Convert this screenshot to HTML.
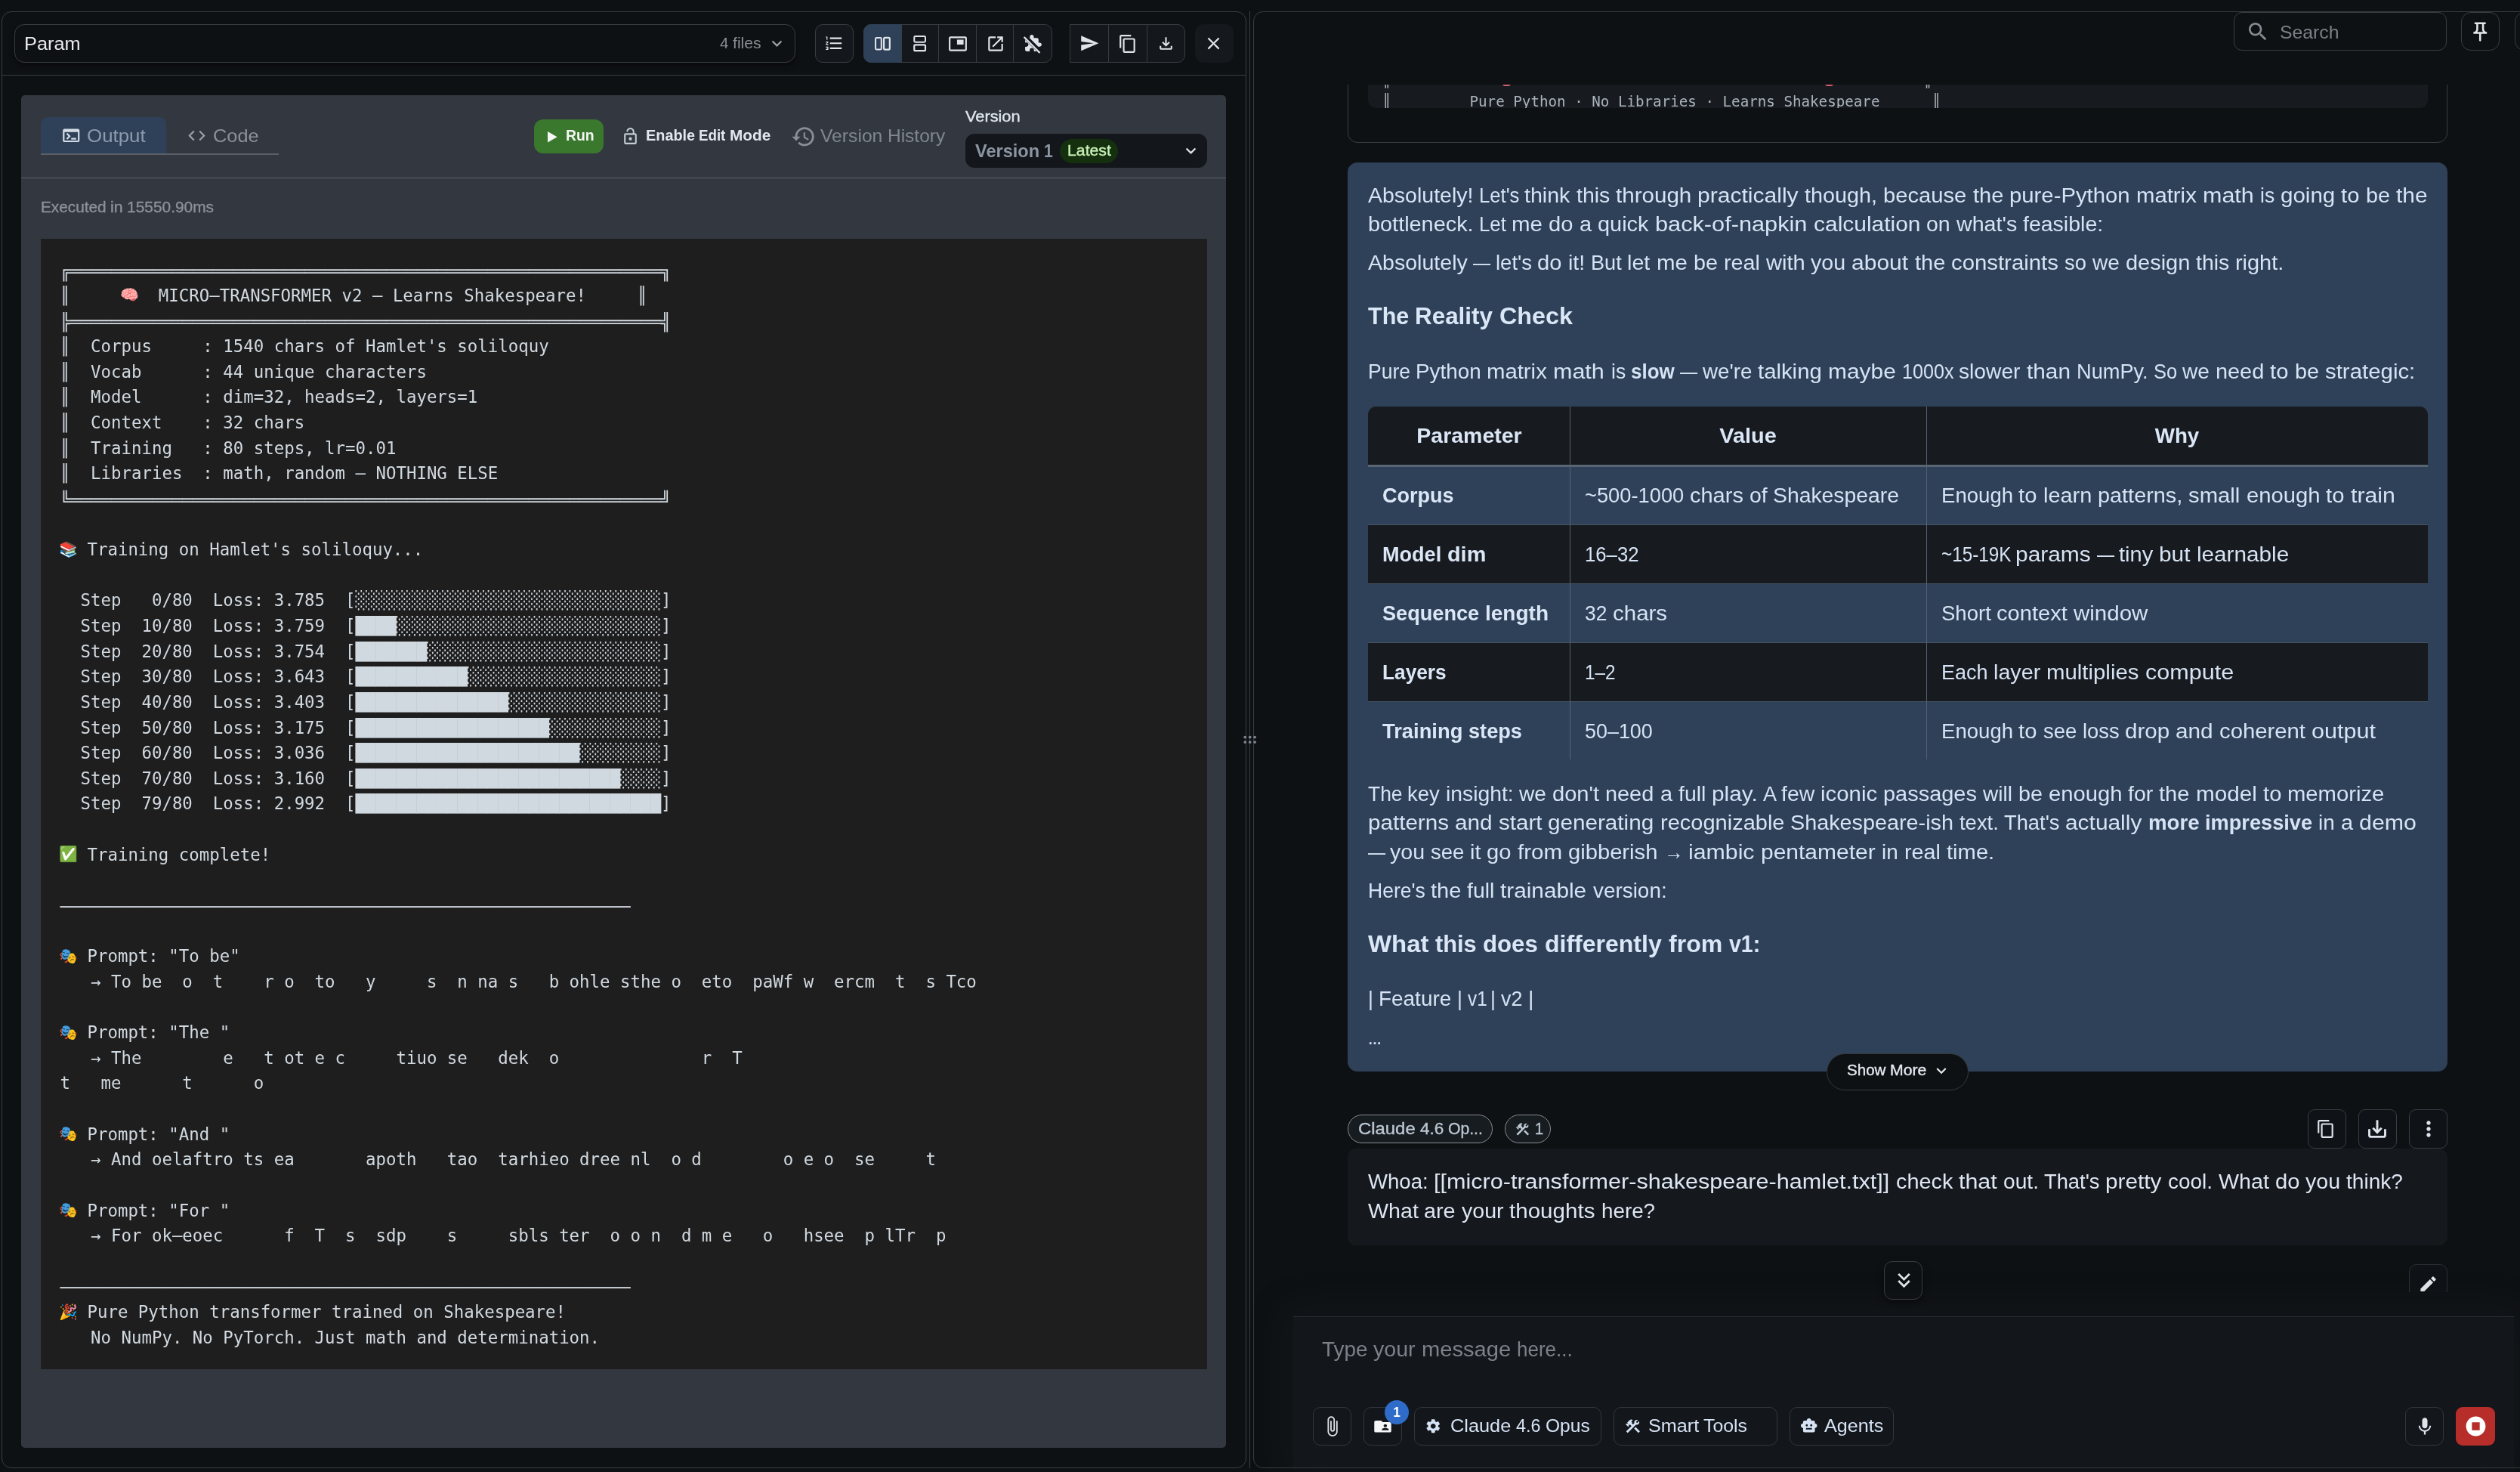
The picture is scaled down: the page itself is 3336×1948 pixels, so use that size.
<!DOCTYPE html><html lang="en"><head><meta charset="utf-8"><title>Param</title><style>

html,body{margin:0;padding:0;background:#0e1114;overflow:hidden}
body{width:3336px;height:1948px;position:relative;overflow:hidden;font-family:"Liberation Sans", sans-serif;}
.t{position:absolute;white-space:pre;line-height:1.2;}
.w span{position:absolute;top:0;transform-origin:0 0;white-space:pre}
.m{position:absolute;white-space:pre;font-family:"DejaVu Sans Mono", "Liberation Mono", monospace;}
.e{display:inline-block;width:1.1236em;height:1em;overflow:visible;vertical-align:0.07em;line-height:1;font-family:"Noto Color Emoji","DejaVu Sans",sans-serif;font-size:0.89em;text-indent:-0.05em;letter-spacing:0;white-space:nowrap}
svg{display:block;overflow:visible}

.t{font-family:"Liberation Sans", sans-serif}.t b{font-weight:700}
</style></head><body><div id="root" style="position:absolute;left:0;top:0;width:3336px;height:1948px;will-change:transform;transform-origin:0 0">
<div style="position:absolute;left:2px;top:15px;width:1648px;height:1928px;box-sizing:border-box;border:1px solid #393d42;border-radius:13px;background:#0e1114"></div>
<div style="position:absolute;left:3px;top:99px;width:1646px;height:1px;background:#393d42"></div>
<div style="position:absolute;left:19px;top:32px;width:1034px;height:51px;box-sizing:border-box;border:1px solid #393d42;border-radius:13px;background:#0e1114;box-shadow:0 3px 6px rgba(0,0,0,.55)"></div>
<div class="t" id="param" style="top:44.12px;font-size:23.63px;font-weight:400;color:#e9ebee;transform:scaleX(1.0727);transform-origin:0 0;left:31.50px;">Param</div>
<div class="t w" style="top:44.75px;font-size:20.26px;font-weight:400;color:#8a8e94;left:953.00px;"><span style="left:0.00px;transform:scaleX(1.0185)">4 </span><span style="left:17.20px;transform:scaleX(1.0460)">files</span></div>
<svg style="position:absolute;left:1014.70px;top:43.50px;" width="27" height="27" viewBox="0 0 24 24"><path fill="#9da1a6" d="M16.59 8.59L12 13.17 7.41 8.59 6 10l6 6 6-6z"/></svg>
<div style="position:absolute;left:1079px;top:32px;width:51px;height:51px;box-sizing:border-box;border:1px solid #393d42;border-radius:10px;background:#14171c"></div>
<svg style="position:absolute;left:1091.25px;top:44.35px;" width="26.5" height="26.5" viewBox="0 0 24 24"><path fill="#e4e7ea" d="M2 17h2v.5H3v1h1v.5H2v1h3v-4H2v1zm1-9h1V4H2v1h1v3zm-1 3h1.8L2 13.1v.9h3v-1H3.2L5 10.9V10H2v1zm5-6v2h14V5H7zm0 14h14v-2H7v2zm0-6h14v-2H7v2z"/></svg>
<div style="position:absolute;left:1143px;top:32px;width:250px;height:51px;box-sizing:border-box;border:1px solid #393d42;border-radius:10px;background:#14171c"></div>
<div style="position:absolute;left:1143px;top:32px;width:51px;height:51px;border-radius:10px 0 0 10px;background:#2f4158"></div>
<div style="position:absolute;left:1193px;top:33px;width:1px;height:49px;background:#393d42"></div>
<div style="position:absolute;left:1242px;top:33px;width:1px;height:49px;background:#393d42"></div>
<div style="position:absolute;left:1292px;top:33px;width:1px;height:49px;background:#393d42"></div>
<div style="position:absolute;left:1341px;top:33px;width:1px;height:49px;background:#393d42"></div>
<svg style="position:absolute;left:1155px;top:44px;" width="28" height="28" viewBox="0 0 28 28"><g transform="translate(14 14) scale(.92) translate(-14 -14)"><rect x="3.2" y="5.2" width="8.4" height="17" rx="1.6" fill="none" stroke="#dfe4ea" stroke-width="2.2"/><rect x="15.2" y="5.2" width="8.4" height="17" rx="1.6" fill="none" stroke="#dfe4ea" stroke-width="2.4"/></g></svg>
<svg style="position:absolute;left:1204px;top:44px;" width="28" height="28" viewBox="0 0 28 28"><g transform="translate(14 14) scale(.92) translate(-14 -14)"><rect x="5.6" y="3.2" width="16" height="8.4" rx="1.6" fill="none" stroke="#dfe4ea" stroke-width="2.2"/><rect x="5.6" y="15.6" width="16" height="8.4" rx="1.6" fill="none" stroke="#dfe4ea" stroke-width="2.4"/></g></svg>
<svg style="position:absolute;left:1254.50px;top:44.50px;" width="26" height="26" viewBox="0 0 24 24"><path fill="#dfe4ea" d="M19 7h-8v6h8V7zm2-4H3c-1.1 0-2 .9-2 2v14c0 1.1.9 1.98 2 1.98h18c1.1 0 2-.88 2-1.98V5c0-1.1-.9-2-2-2zm0 16.01H3V4.98h18v14.03z"/></svg>
<svg style="position:absolute;left:1305.00px;top:44.50px;" width="26" height="26" viewBox="0 0 24 24"><path fill="#dfe4ea" d="M19 19H5V5h7V3H5c-1.11 0-2 .9-2 2v14c0 1.1.89 2 2 2h14c1.1 0 2-.9 2-2v-7h-2v7zM14 3v2h3.59l-9.83 9.83 1.41 1.41L19 6.41V10h2V3h-7z"/></svg>
<svg style="position:absolute;left:1354.50px;top:45.00px;" width="25" height="25" viewBox="0 0 24 24"><path fill="#dfe4ea" d="M20.5 11H19V7c0-1.1-.9-2-2-2h-4V3.5C13 2.12 11.88 1 10.5 1S8 2.12 8 3.5V5H4c-1.1 0-1.99.9-1.99 2v3.8H3.5c1.49 0 2.7 1.21 2.7 2.7s-1.21 2.7-2.7 2.7H2V20c0 1.1.9 2 2 2h3.8v-1.5c0-1.49 1.21-2.7 2.7-2.7 1.49 0 2.7 1.21 2.7 2.7V22H17c1.1 0 2-.9 2-2v-4h1.5c1.38 0 2.5-1.12 2.5-2.5S21.88 11 20.5 11z"/></svg>
<svg style="position:absolute;left:1353px;top:43.5px;" width="28" height="28" viewBox="0 0 28 28"><path d="M3 3.5 L25 25.5" stroke="#14171c" stroke-width="6"/><path d="M2.6 5 L23.5 26" stroke="#dfe4ea" stroke-width="2.4"/></svg>
<div style="position:absolute;left:1416px;top:32px;width:153px;height:51px;box-sizing:border-box;border:1px solid #393d42;border-radius:0 10px 10px 0;background:#14171c"></div>
<div style="position:absolute;left:1467px;top:33px;width:1px;height:49px;background:#393d42"></div>
<div style="position:absolute;left:1518px;top:33px;width:1px;height:49px;background:#393d42"></div>
<svg style="position:absolute;left:1428.75px;top:44.25px;" width="26.5" height="26.5" viewBox="0 0 24 24"><path fill="#dfe4ea" d="M2.01 21L23 12 2.01 3 2 10l15 2-15 2z"/></svg>
<svg style="position:absolute;left:1479.50px;top:44.50px;" width="26" height="26" viewBox="0 0 24 24"><path fill="#dfe4ea" d="M16 1H4c-1.1 0-2 .9-2 2v14h2V3h12V1zm3 4H8c-1.1 0-2 .9-2 2v14c0 1.1.9 2 2 2h11c1.1 0 2-.9 2-2V7c0-1.1-.9-2-2-2zm0 16H8V7h11v14z"/></svg>
<svg style="position:absolute;left:1531.00px;top:44.50px;" width="25" height="25" viewBox="0 0 24 24"><path fill="#dfe4ea" d="M18 15v3H6v-3H4v3c0 1.1.9 2 2 2h12c1.1 0 2-.9 2-2v-3h-2zm-1-4l-1.41-1.41L13 12.17V4h-2v8.17L8.41 9.59 7 11l5 5 5-5z"/></svg>
<div style="position:absolute;left:1582px;top:32px;width:51px;height:51px;border-radius:11px;background:#15181c"></div>
<svg style="position:absolute;left:1593.00px;top:44.00px;" width="27" height="27" viewBox="0 0 24 24"><path fill="#e4e7ea" d="M19 6.41L17.59 5 12 10.59 6.41 5 5 6.41 10.59 12 5 17.59 6.41 19 12 13.41 17.59 19 19 17.59 13.41 12z"/></svg>
<div style="position:absolute;left:28px;top:126px;width:1595px;height:1790px;border-radius:5px;background:#333740"></div>
<div style="position:absolute;left:54px;top:155px;width:166px;height:49px;border-radius:9px 9px 0 0;background:#2f4158"></div>
<div style="position:absolute;left:54px;top:203px;width:315px;height:2px;background:#5b5f67"></div>
<svg style="position:absolute;left:80.75px;top:166.25px;" width="26.5" height="26.5" viewBox="0 0 24 24"><path fill="#d3dbe6" d="M20 4H4c-1.11 0-2 .9-2 2v12c0 1.1.89 2 2 2h16c1.1 0 2-.9 2-2V6c0-1.1-.9-2-2-2zm0 14H4V8h16v10zm-2-1h-6v-2h6v2zM7.5 17l-1.41-1.41L8.67 13l-2.59-2.59L7.5 9l4 4-4 4z"/></svg>
<div class="t" id="output" style="top:165.72px;font-size:23.63px;font-weight:400;color:#8c9bad;transform:scaleX(1.0956);transform-origin:0 0;left:115.00px;">Output</div>
<svg style="position:absolute;left:247.00px;top:166.00px;" width="27" height="27" viewBox="0 0 24 24"><path fill="#9aa0a8" d="M9.4 16.6L4.8 12l4.6-4.6L8 6l-6 6 6 6 1.4-1.4zm5.2 0l4.6-4.6-4.6-4.6L16 6l6 6-6 6-1.4-1.4z"/></svg>
<div class="t" id="code" style="top:165.72px;font-size:23.63px;font-weight:400;color:#8a919b;transform:scaleX(1.0736);transform-origin:0 0;left:281.50px;">Code</div>
<div style="position:absolute;left:707px;top:158px;width:92px;height:45px;border-radius:12px;background:#3a782e"></div>
<svg style="position:absolute;left:725px;top:173.8px;" width="13" height="14.4" viewBox="0 0 13 14.4"><path d="M0 0 L12.6 7.2 L0 14.4 Z" fill="#f4f7f4"/></svg>
<div class="t" id="run" style="top:166.95px;font-size:20.26px;font-weight:700;color:#f4f7f4;transform:scaleX(0.9567);transform-origin:0 0;left:748.50px;">Run</div>
<svg style="position:absolute;left:822px;top:168.3px;" width="25" height="25" viewBox="0 0 24 24"><path fill="#c5ccd6" d="M12 17c1.1 0 2-.9 2-2s-.9-2-2-2-2 .9-2 2 .9 2 2 2zm6-9h-1V6c0-2.76-2.24-5-5-5S7 3.24 7 6h1.9c0-1.71 1.39-3.1 3.1-3.1 1.71 0 3.1 1.39 3.1 3.1v2H6c-1.1 0-2 .9-2 2v10c0 1.1.9 2 2 2h12c1.1 0 2-.9 2-2V10c0-1.1-.9-2-2-2zm0 12H6V10h12v10z"/></svg>
<div class="t w" style="top:166.95px;font-size:20.26px;font-weight:700;color:#e3e7ee;left:854.50px;"><span style="left:0.00px;transform:scaleX(0.9809)">Enable </span><span style="left:70.66px;transform:scaleX(0.9245)">Edit </span><span style="left:111.22px;transform:scaleX(1.0278)">Mode</span></div>
<svg style="position:absolute;left:1047.25px;top:164.05px;" width="33.5" height="33.5" viewBox="0 0 24 24"><path fill="#8a9099" d="M13 3c-4.97 0-9 4.03-9 9H1l3.89 3.89.07.14L9 12H6c0-3.87 3.13-7 7-7s7 3.13 7 7-3.13 7-7 7c-1.93 0-3.68-.79-4.94-2.06l-1.42 1.42C8.27 19.99 10.51 21 13 21c4.97 0 9-4.03 9-9s-4.03-9-9-9zm-1 5v5l4.28 2.54.72-1.21-3.5-2.08V8H12z"/></svg>
<div class="t w" style="top:166.02px;font-size:23.63px;font-weight:400;color:#7f8791;left:1086.00px;"><span style="left:0.00px;transform:scaleX(1.0450)">Version </span><span style="left:89.22px;transform:scaleX(1.0357)">History</span></div>
<div class="t" id="verlabel" style="top:142.45px;font-size:20.26px;font-weight:400;color:#dfe6ef;-webkit-text-stroke:0.35px currentColor;transform:scaleX(1.0738);transform-origin:0 0;left:1277.50px;">Version</div>
<div style="position:absolute;left:1278px;top:177px;width:320px;height:45px;border-radius:12px;background:#13161b"></div>
<div class="t w" style="top:185.62px;font-size:23.63px;font-weight:700;color:#8c95a2;left:1290.50px;"><span style="left:0.00px;transform:scaleX(0.9968)">Version </span><span style="left:91.62px;transform:scaleX(0.9000)">1</span></div>
<div style="position:absolute;left:1403px;top:184px;width:77px;height:32px;border-radius:16px;background:#15300e"></div>
<div class="t" id="latest" style="top:186.85px;font-size:20.26px;font-weight:400;color:#c9f2b8;-webkit-text-stroke:0.35px currentColor;transform:scaleX(1.0493);transform-origin:0 0;left:1413.00px;">Latest</div>
<svg style="position:absolute;left:1563.00px;top:185.50px;" width="27" height="27" viewBox="0 0 24 24"><path fill="#dfe4ea" d="M16.59 8.59L12 13.17 7.41 8.59 6 10l6 6 6-6z"/></svg>
<div style="position:absolute;left:28px;top:235px;width:1595px;height:1px;background:#5a5e66"></div>
<div class="t w" style="top:262.45px;font-size:20.26px;font-weight:400;color:#8c9199;-webkit-text-stroke:0.35px currentColor;left:53.50px;"><span style="left:0.00px;transform:scaleX(1.0262)">Executed </span><span style="left:92.42px;transform:scaleX(1.0526)">in </span><span style="left:114.94px;transform:scaleX(1.0325)">15550.90ms</span></div>
<div style="position:absolute;left:54px;top:316px;width:1544px;height:1496px;background:#1e1e1e"></div>
<div class="m" style="left:79.6px;top:342.85px;font-size:22.4px;line-height:33.6px;height:33.6px;color:#d1d9e0">╔══════════════════════════════════════════════════════════╗</div>
<div class="m" style="left:79.6px;top:374.88px;font-size:22.4px;line-height:33.6px;height:33.6px;color:#d1d9e0">║     <span class="e">🧠</span>  MICRO—TRANSFORMER v2 — Learns Shakespeare!     ║</div>
<div class="m" style="left:79.6px;top:410.11px;font-size:22.4px;line-height:33.6px;height:33.6px;color:#d1d9e0">╠══════════════════════════════════════════════════════════╣</div>
<div class="m" style="left:79.6px;top:442.14px;font-size:22.4px;line-height:33.6px;height:33.6px;color:#d1d9e0">║  Corpus     : 1540 chars of Hamlet's soliloquy</div>
<div class="m" style="left:79.6px;top:475.77px;font-size:22.4px;line-height:33.6px;height:33.6px;color:#d1d9e0">║  Vocab      : 44 unique characters</div>
<div class="m" style="left:79.6px;top:509.40px;font-size:22.4px;line-height:33.6px;height:33.6px;color:#d1d9e0">║  Model      : dim=32, heads=2, layers=1</div>
<div class="m" style="left:79.6px;top:543.03px;font-size:22.4px;line-height:33.6px;height:33.6px;color:#d1d9e0">║  Context    : 32 chars</div>
<div class="m" style="left:79.6px;top:576.66px;font-size:22.4px;line-height:33.6px;height:33.6px;color:#d1d9e0">║  Training   : 80 steps, lr=0.01</div>
<div class="m" style="left:79.6px;top:610.29px;font-size:22.4px;line-height:33.6px;height:33.6px;color:#d1d9e0">║  Libraries  : math, random — NOTHING ELSE</div>
<div class="m" style="left:79.6px;top:645.52px;font-size:22.4px;line-height:33.6px;height:33.6px;color:#d1d9e0">╚══════════════════════════════════════════════════════════╝</div>
<div class="m" style="left:79.6px;top:711.18px;font-size:22.4px;line-height:33.6px;height:33.6px;color:#d1d9e0"><span class="e">📚</span> Training on Hamlet's soliloquy...</div>
<div class="m" style="left:79.6px;top:778.44px;font-size:22.4px;line-height:33.6px;height:33.6px;color:#d1d9e0">  Step   0/80  Loss: 3.785  [░░░░░░░░░░░░░░░░░░░░░░░░░░░░░░]</div>
<div class="m" style="left:79.6px;top:812.07px;font-size:22.4px;line-height:33.6px;height:33.6px;color:#d1d9e0">  Step  10/80  Loss: 3.759  [████░░░░░░░░░░░░░░░░░░░░░░░░░░]</div>
<div class="m" style="left:79.6px;top:845.70px;font-size:22.4px;line-height:33.6px;height:33.6px;color:#d1d9e0">  Step  20/80  Loss: 3.754  [███████░░░░░░░░░░░░░░░░░░░░░░░]</div>
<div class="m" style="left:79.6px;top:879.33px;font-size:22.4px;line-height:33.6px;height:33.6px;color:#d1d9e0">  Step  30/80  Loss: 3.643  [███████████░░░░░░░░░░░░░░░░░░░]</div>
<div class="m" style="left:79.6px;top:912.96px;font-size:22.4px;line-height:33.6px;height:33.6px;color:#d1d9e0">  Step  40/80  Loss: 3.403  [███████████████░░░░░░░░░░░░░░░]</div>
<div class="m" style="left:79.6px;top:946.59px;font-size:22.4px;line-height:33.6px;height:33.6px;color:#d1d9e0">  Step  50/80  Loss: 3.175  [███████████████████░░░░░░░░░░░]</div>
<div class="m" style="left:79.6px;top:980.22px;font-size:22.4px;line-height:33.6px;height:33.6px;color:#d1d9e0">  Step  60/80  Loss: 3.036  [██████████████████████░░░░░░░░]</div>
<div class="m" style="left:79.6px;top:1013.85px;font-size:22.4px;line-height:33.6px;height:33.6px;color:#d1d9e0">  Step  70/80  Loss: 3.160  [██████████████████████████░░░░]</div>
<div class="m" style="left:79.6px;top:1047.48px;font-size:22.4px;line-height:33.6px;height:33.6px;color:#d1d9e0">  Step  79/80  Loss: 2.992  [██████████████████████████████]</div>
<div class="m" style="left:79.6px;top:1114.74px;font-size:22.4px;line-height:33.6px;height:33.6px;color:#d1d9e0"><span class="e">✅</span> Training complete!</div>
<div class="m" style="left:79.6px;top:1184.00px;font-size:22.4px;line-height:33.6px;height:33.6px;color:#d1d9e0">────────────────────────────────────────────────────────</div>
<div class="m" style="left:79.6px;top:1249.26px;font-size:22.4px;line-height:33.6px;height:33.6px;color:#d1d9e0"><span class="e">🎭</span> Prompt: "To be"</div>
<div class="m" style="left:79.6px;top:1282.89px;font-size:22.4px;line-height:33.6px;height:33.6px;color:#d1d9e0">   → To be  o  t    r o  to   y     s  n na s   b ohle sthe o  eto  paWf w  ercm  t  s Tco</div>
<div class="m" style="left:79.6px;top:1350.15px;font-size:22.4px;line-height:33.6px;height:33.6px;color:#d1d9e0"><span class="e">🎭</span> Prompt: "The "</div>
<div class="m" style="left:79.6px;top:1383.78px;font-size:22.4px;line-height:33.6px;height:33.6px;color:#d1d9e0">   → The        e   t ot e c     tiuo se   dek  o              r  T</div>
<div class="m" style="left:79.6px;top:1417.41px;font-size:22.4px;line-height:33.6px;height:33.6px;color:#d1d9e0">t   me      t      o</div>
<div class="m" style="left:79.6px;top:1484.67px;font-size:22.4px;line-height:33.6px;height:33.6px;color:#d1d9e0"><span class="e">🎭</span> Prompt: "And "</div>
<div class="m" style="left:79.6px;top:1518.30px;font-size:22.4px;line-height:33.6px;height:33.6px;color:#d1d9e0">   → And oelaftro ts ea       apoth   tao  tarhieo dree nl  o d        o e o  se     t</div>
<div class="m" style="left:79.6px;top:1585.56px;font-size:22.4px;line-height:33.6px;height:33.6px;color:#d1d9e0"><span class="e">🎭</span> Prompt: "For "</div>
<div class="m" style="left:79.6px;top:1619.19px;font-size:22.4px;line-height:33.6px;height:33.6px;color:#d1d9e0">   → For ok—eoec      f  T  s  sdp    s     sbls ter  o o n  d m e   o   hsee  p lTr  p</div>
<div class="m" style="left:79.6px;top:1688.45px;font-size:22.4px;line-height:33.6px;height:33.6px;color:#d1d9e0">────────────────────────────────────────────────────────</div>
<div class="m" style="left:79.6px;top:1720.08px;font-size:22.4px;line-height:33.6px;height:33.6px;color:#d1d9e0"><span class="e">🎉</span> Pure Python transformer trained on Shakespeare!</div>
<div class="m" style="left:79.6px;top:1753.71px;font-size:22.4px;line-height:33.6px;height:33.6px;color:#d1d9e0">   No NumPy. No PyTorch. Just math and determination.</div>
<div style="position:absolute;left:1654px;top:15px;width:1px;height:1928px;background:#393d42"></div>
<div style="position:absolute;left:1659px;top:15px;width:1800px;height:1928px;box-sizing:border-box;border:1px solid #393d42;border-radius:13px;background:#0e1114"></div>
<svg style="position:absolute;left:1644px;top:970px;" width="22" height="18" viewBox="0 0 22 18"><circle cx="4.3" cy="5.6" r="1.9" fill="#7d8590"/><circle cx="4.3" cy="12.1" r="1.9" fill="#7d8590"/><circle cx="10.7" cy="5.6" r="1.9" fill="#7d8590"/><circle cx="10.7" cy="12.1" r="1.9" fill="#7d8590"/><circle cx="17.1" cy="5.6" r="1.9" fill="#7d8590"/><circle cx="17.1" cy="12.1" r="1.9" fill="#7d8590"/></svg>
<div style="position:absolute;left:1660px;top:112px;width:1676px;height:1600px;overflow:hidden">
<div style="position:absolute;left:124px;top:-92px;width:1456px;height:169px;box-sizing:border-box;border:1px solid #393d42;border-radius:13px"></div>
<div style="position:absolute;left:151px;top:-72px;width:1403px;height:103px;border-radius:11px;background:#171a1e;overflow:hidden"></div>
<div style="position:absolute;left:151px;top:-72px;width:1403px;height:103px;overflow:hidden"><div class="m" style="left:19.0px;top:80.76px;font-size:19.2px;line-height:28.8px;color:#a9b3bc">║         Pure Python · No Libraries · Learns Shakespeare      ║</div><div class="m" style="left:19.0px;top:51.96px;font-size:19.2px;line-height:28.8px;color:#a9b3bc">║                                                             ║</div><div style="position:absolute;left:178px;top:66.5px;width:11px;height:7px;border-radius:6px;background:#d9606e"></div><div style="position:absolute;left:605px;top:66.5px;width:11px;height:7px;border-radius:6px;background:#d9606e"></div></div>
</div>
<div style="position:absolute;left:2957px;top:16px;width:282px;height:51px;box-sizing:border-box;border:1px solid #393d42;border-radius:11px;background:#0e1114"></div>
<svg style="position:absolute;left:2973.00px;top:26.00px;" width="32" height="32" viewBox="0 0 24 24"><path fill="#868b92" d="M15.5 14h-.79l-.28-.27C15.41 12.59 16 11.11 16 9.5 16 5.91 13.09 3 9.5 3S3 5.91 3 9.5 5.91 16 9.5 16c1.61 0 3.09-.59 4.23-1.57l.27.28v.79l5 4.99L20.49 19l-4.99-5zm-6 0C7.01 14 5 11.99 5 9.5S7.01 5 9.5 5 14 7.01 14 9.5 11.99 14 9.5 14z"/></svg>
<div class="t" id="search" style="top:29.12px;font-size:23.63px;font-weight:400;color:#7c8087;transform:scaleX(1.0478);transform-origin:0 0;left:3017.50px;">Search</div>
<div style="position:absolute;left:3258px;top:16px;width:51px;height:51px;box-sizing:border-box;border:1px solid #393d42;border-radius:13px;background:#0e1114"></div>
<svg style="position:absolute;left:3268.45px;top:26.75px;" width="30.5" height="30.5" viewBox="0 0 24 24"><path fill="#e4e7ea" d="M14 4v5c0 1.12.37 2.16 1 3H9c.65-.86 1-1.9 1-3V4h4m3-2H7c-.55 0-1 .45-1 1s.45 1 1 1h1v5c0 1.66-1.34 3-3 3v2h5.97v7l1 1 1-1v-7H19v-2c-1.66 0-3-1.34-3-3V4h1c.55 0 1-.45 1-1s-.45-1-1-1z"/></svg>
<div style="position:absolute;left:3329px;top:16px;width:51px;height:51px;box-sizing:border-box;border:1px solid #393d42;border-radius:13px;background:#0e1114"></div>
<div style="position:absolute;left:1784px;top:215px;width:1456px;height:1203px;border-radius:13px;background:#2f4158"></div>
<div class="t w" style="top:242.70px;font-size:27.01px;font-weight:400;color:#d6e3f4;left:1810.50px;"><span style="left:0.00px;transform:scaleX(1.0555)">Absolutely! </span><span style="left:147.33px;transform:scaleX(0.9500)">Let's </span><span style="left:207.84px;transform:scaleX(1.0595)">think </span><span style="left:276.23px;transform:scaleX(1.0536)">this </span><span style="left:328.42px;transform:scaleX(1.0954)">through </span><span style="left:436.95px;transform:scaleX(1.1131)">practically </span><span style="left:578.92px;transform:scaleX(1.0661)">though, </span><span style="left:682.97px;transform:scaleX(1.0808)">because </span><span style="left:801.42px;transform:scaleX(1.0746)">the </span><span style="left:849.83px;transform:scaleX(1.0849)">pure-Python </span><span style="left:1017.55px;transform:scaleX(1.0855)">matrix </span><span style="left:1105.47px;transform:scaleX(1.1284)">math </span><span style="left:1181.67px;transform:scaleX(0.9815)">is </span><span style="left:1208.17px;transform:scaleX(1.0941)">going </span><span style="left:1288.67px;transform:scaleX(1.0832)">to </span><span style="left:1321.20px;transform:scaleX(1.0658)">be </span><span style="left:1361.22px;transform:scaleX(1.1074)">the</span></div>
<div class="t w" style="top:281.10px;font-size:27.01px;font-weight:400;color:#d6e3f4;left:1810.50px;"><span style="left:0.00px;transform:scaleX(1.0692)">bottleneck. </span><span style="left:147.66px;transform:scaleX(0.9563)">Let </span><span style="left:190.73px;transform:scaleX(1.0902)">me </span><span style="left:239.81px;transform:scaleX(1.0791)">do </span><span style="left:280.33px;transform:scaleX(1.0714)">a </span><span style="left:304.47px;transform:scaleX(1.0707)">quick </span><span style="left:380.00px;transform:scaleX(1.1375)">back-of-napkin </span><span style="left:590.00px;transform:scaleX(1.1093)">calculation </span><span style="left:739.86px;transform:scaleX(1.0545)">on </span><span style="left:779.45px;transform:scaleX(1.0607)">what's </span><span style="left:867.70px;transform:scaleX(1.0556)">feasible:</span></div>
<div class="t w" style="top:332.30px;font-size:27.01px;font-weight:400;color:#d6e3f4;left:1810.50px;"><span style="left:0.00px;transform:scaleX(1.0577)">Absolutely </span><span style="left:139.70px;transform:scaleX(0.8542)">— </span><span style="left:169.19px;transform:scaleX(1.0194)">let's </span><span style="left:224.94px;transform:scaleX(1.0791)">do </span><span style="left:265.45px;transform:scaleX(1.0548)">it! </span><span style="left:295.53px;transform:scaleX(1.0039)">But </span><span style="left:343.75px;transform:scaleX(1.0637)">let </span><span style="left:382.08px;transform:scaleX(1.0902)">me </span><span style="left:431.16px;transform:scaleX(1.0658)">be </span><span style="left:471.17px;transform:scaleX(1.0634)">real </span><span style="left:527.03px;transform:scaleX(1.0774)">with </span><span style="left:586.86px;transform:scaleX(1.0582)">you </span><span style="left:640.88px;transform:scaleX(1.1124)">about </span><span style="left:724.39px;transform:scaleX(1.0746)">the </span><span style="left:772.80px;transform:scaleX(1.0866)">constraints </span><span style="left:922.81px;transform:scaleX(1.0152)">so </span><span style="left:959.39px;transform:scaleX(1.0398)">we </span><span style="left:1003.09px;transform:scaleX(1.0720)">design </span><span style="left:1096.44px;transform:scaleX(1.0536)">this </span><span style="left:1148.62px;transform:scaleX(1.0698)">right.</span></div>
<div class="t w" style="top:400.11px;font-size:31.65px;font-weight:700;color:#dbe7f7;left:1810.50px;"><span style="left:0.00px;transform:scaleX(0.9654)">The </span><span style="left:62.80px;transform:scaleX(0.9924)">Reality </span><span style="left:174.50px;transform:scaleX(1.0211)">Check</span></div>
<div class="t w" style="top:475.90px;font-size:27.01px;font-weight:400;color:#d6e3f4;left:1810.50px;"><span style="left:0.00px;transform:scaleX(0.9831)">Pure </span><span style="left:63.45px;transform:scaleX(1.0324)">Python </span><span style="left:157.98px;transform:scaleX(1.0855)">matrix </span><span style="left:245.91px;transform:scaleX(1.1284)">math </span><span style="left:322.11px;transform:scaleX(0.9815)">is </span><span style="left:348.61px;transform:scaleX(0.9641)"><b>slow </b></span><span style="left:413.70px;transform:scaleX(0.8542)">— </span><span style="left:443.19px;transform:scaleX(1.0281)">we're </span><span style="left:516.38px;transform:scaleX(1.0858)">talking </span><span style="left:609.28px;transform:scaleX(1.1076)">maybe </span><span style="left:707.36px;transform:scaleX(0.9314)">1000x </span><span style="left:782.88px;transform:scaleX(1.0438)">slower </span><span style="left:872.16px;transform:scaleX(1.1025)">than </span><span style="left:938.38px;transform:scaleX(1.0065)">NumPy. </span><span style="left:1040.55px;transform:scaleX(0.9437)">So </span><span style="left:1078.80px;transform:scaleX(1.0398)">we </span><span style="left:1122.50px;transform:scaleX(1.0694)">need </span><span style="left:1194.77px;transform:scaleX(1.0832)">to </span><span style="left:1227.30px;transform:scaleX(1.0658)">be </span><span style="left:1267.31px;transform:scaleX(1.0890)">strategic:</span></div>
<div style="position:absolute;left:1811px;top:538px;width:1403px;height:78px;border-radius:11px 11px 0 0;background:#171a1e"></div>
<div style="position:absolute;left:1811px;top:772px;width:1403px;height:78.5px;background:#171a1e"></div>
<div style="position:absolute;left:1811px;top:694px;width:1403px;height:78px;background:#171a1e"></div>
<div style="position:absolute;left:1811px;top:772px;width:1403px;height:78.5px;background:#2f4158"></div>
<div style="position:absolute;left:1811px;top:850.5px;width:1403px;height:77.5px;background:#171a1e"></div>
<div style="position:absolute;left:1811px;top:615px;width:1403px;height:3px;background:#596574"></div>
<div style="position:absolute;left:1811px;top:693.5px;width:1403px;height:1px;background:#465364"></div>
<div style="position:absolute;left:1811px;top:771.5px;width:1403px;height:1px;background:#465364"></div>
<div style="position:absolute;left:1811px;top:850px;width:1403px;height:1px;background:#465364"></div>
<div style="position:absolute;left:1811px;top:927.5px;width:1403px;height:1px;background:#465364"></div>
<div style="position:absolute;left:2078px;top:538px;width:1px;height:467px;background:#566170"></div>
<div style="position:absolute;left:2550px;top:538px;width:1px;height:467px;background:#566170"></div>
<div class="t" style="top:560.60px;font-size:27.01px;font-weight:700;color:#dbe7f7;transform:scaleX(1.0544);transform-origin:50% 0;left:944.50px;width:2000px;text-align:center;"><span id="th1">Parameter</span></div>
<div class="t" style="top:560.60px;font-size:27.01px;font-weight:700;color:#dbe7f7;transform:scaleX(1.0684);transform-origin:50% 0;left:1314.00px;width:2000px;text-align:center;"><span id="th2">Value</span></div>
<div class="t" style="top:560.60px;font-size:27.01px;font-weight:700;color:#dbe7f7;transform:scaleX(1.0285);transform-origin:50% 0;left:1882.00px;width:2000px;text-align:center;"><span id="th3">Why</span></div>
<div class="t" id="r0a" style="top:640.10px;font-size:27.01px;font-weight:700;color:#dbe7f7;transform:scaleX(1.0005);transform-origin:0 0;left:1830.00px;">Corpus</div>
<div class="t w" style="top:640.10px;font-size:27.01px;font-weight:400;color:#d6e3f4;left:2098.00px;"><span style="left:0.00px;transform:scaleX(1.0108)">~500-1000 </span><span style="left:138.86px;transform:scaleX(1.0739)">chars </span><span style="left:217.83px;transform:scaleX(1.0536)">of </span><span style="left:249.47px;transform:scaleX(1.0495)">Shakespeare</span></div>
<div class="t w" style="top:640.10px;font-size:27.01px;font-weight:400;color:#d6e3f4;left:2569.50px;"><span style="left:0.00px;transform:scaleX(1.0219)">Enough </span><span style="left:102.80px;transform:scaleX(1.0832)">to </span><span style="left:135.33px;transform:scaleX(1.0694)">learn </span><span style="left:207.56px;transform:scaleX(1.0687)">patterns, </span><span style="left:327.86px;transform:scaleX(1.0842)">small </span><span style="left:404.31px;transform:scaleX(1.0812)">enough </span><span style="left:509.84px;transform:scaleX(1.0832)">to </span><span style="left:542.38px;transform:scaleX(1.1202)">train</span></div>
<div class="t w" style="top:717.50px;font-size:27.01px;font-weight:700;color:#dbe7f7;left:1830.00px;"><span style="left:0.00px;transform:scaleX(1.0024)">Model </span><span style="left:85.70px;transform:scaleX(1.0683)">dim</span></div>
<div class="t" id="r1b" style="top:717.50px;font-size:27.01px;font-weight:400;color:#d6e3f4;transform:scaleX(0.9530);transform-origin:0 0;left:2098.00px;">16–32</div>
<div class="t w" style="top:717.50px;font-size:27.01px;font-weight:400;color:#d6e3f4;left:2569.50px;"><span style="left:0.00px;transform:scaleX(0.9000)">~15-19K </span><span style="left:98.14px;transform:scaleX(1.1073)">params </span><span style="left:206.16px;transform:scaleX(0.8542)">— </span><span style="left:235.64px;transform:scaleX(1.0751)">tiny </span><span style="left:288.89px;transform:scaleX(1.1065)">but </span><span style="left:338.73px;transform:scaleX(1.0997)">learnable</span></div>
<div class="t w" style="top:795.50px;font-size:27.01px;font-weight:700;color:#dbe7f7;left:1830.00px;"><span style="left:0.00px;transform:scaleX(1.0044)">Sequence </span><span style="left:135.66px;transform:scaleX(1.0374)">length</span></div>
<div class="t w" style="top:795.50px;font-size:27.01px;font-weight:400;color:#d6e3f4;left:2098.00px;"><span style="left:0.00px;transform:scaleX(0.9754)">32 </span><span style="left:36.62px;transform:scaleX(1.0923)">chars</span></div>
<div class="t w" style="top:795.50px;font-size:27.01px;font-weight:400;color:#d6e3f4;left:2569.50px;"><span style="left:0.00px;transform:scaleX(1.0200)">Short </span><span style="left:73.48px;transform:scaleX(1.0775)">context </span><span style="left:175.38px;transform:scaleX(1.0921)">window</span></div>
<div class="t" id="r3a" style="top:873.50px;font-size:27.01px;font-weight:700;color:#dbe7f7;transform:scaleX(0.9724);transform-origin:0 0;left:1830.00px;">Layers</div>
<div class="t" id="r3b" style="top:873.50px;font-size:27.01px;font-weight:400;color:#d6e3f4;transform:scaleX(0.9000);transform-origin:0 0;left:2098.00px;">1–2</div>
<div class="t w" style="top:873.50px;font-size:27.01px;font-weight:400;color:#d6e3f4;left:2569.50px;"><span style="left:0.00px;transform:scaleX(1.0020)">Each </span><span style="left:69.19px;transform:scaleX(1.0641)">layer </span><span style="left:139.45px;transform:scaleX(1.0880)">multiplies </span><span style="left:270.06px;transform:scaleX(1.1313)">compute</span></div>
<div class="t w" style="top:951.50px;font-size:27.01px;font-weight:700;color:#dbe7f7;left:1830.00px;"><span style="left:0.00px;transform:scaleX(1.0131)">Training </span><span style="left:113.98px;transform:scaleX(1.0062)">steps</span></div>
<div class="t" id="r4b" style="top:951.50px;font-size:27.01px;font-weight:400;color:#d6e3f4;transform:scaleX(0.9967);transform-origin:0 0;left:2098.00px;">50–100</div>
<div class="t w" style="top:951.50px;font-size:27.01px;font-weight:400;color:#d6e3f4;left:2569.50px;"><span style="left:0.00px;transform:scaleX(1.0219)">Enough </span><span style="left:102.80px;transform:scaleX(1.0832)">to </span><span style="left:135.33px;transform:scaleX(1.0174)">see </span><span style="left:187.27px;transform:scaleX(1.0127)">loss </span><span style="left:243.50px;transform:scaleX(1.0947)">drop </span><span style="left:310.88px;transform:scaleX(1.1002)">and </span><span style="left:368.70px;transform:scaleX(1.0847)">coherent </span><span style="left:490.81px;transform:scaleX(1.1332)">output</span></div>
<div class="t w" style="top:1034.70px;font-size:27.01px;font-weight:400;color:#d6e3f4;left:1810.50px;"><span style="left:0.00px;transform:scaleX(0.9798)">The </span><span style="left:52.94px;transform:scaleX(1.0155)">key </span><span style="left:103.23px;transform:scaleX(1.0490)">insight: </span><span style="left:200.86px;transform:scaleX(1.0398)">we </span><span style="left:244.56px;transform:scaleX(1.0776)">don't </span><span style="left:314.84px;transform:scaleX(1.0694)">need </span><span style="left:387.11px;transform:scaleX(1.0714)">a </span><span style="left:411.25px;transform:scaleX(1.0524)">full </span><span style="left:455.48px;transform:scaleX(1.1062)">play. </span><span style="left:523.02px;transform:scaleX(1.0026)">A </span><span style="left:547.11px;transform:scaleX(1.0521)">few </span><span style="left:599.22px;transform:scaleX(1.0880)">iconic </span><span style="left:682.48px;transform:scaleX(1.0724)">passages </span><span style="left:814.48px;transform:scaleX(1.0382)">will </span><span style="left:861.20px;transform:scaleX(1.0658)">be </span><span style="left:901.22px;transform:scaleX(1.0812)">enough </span><span style="left:1006.75px;transform:scaleX(1.0557)">for </span><span style="left:1047.94px;transform:scaleX(1.0746)">the </span><span style="left:1096.34px;transform:scaleX(1.0987)">model </span><span style="left:1185.39px;transform:scaleX(1.0832)">to </span><span style="left:1217.92px;transform:scaleX(1.0827)">memorize</span></div>
<div class="t w" style="top:1073.10px;font-size:27.01px;font-weight:400;color:#d6e3f4;left:1810.50px;"><span style="left:0.00px;transform:scaleX(1.0968)">patterns </span><span style="left:115.23px;transform:scaleX(1.1002)">and </span><span style="left:173.06px;transform:scaleX(1.0945)">start </span><span style="left:238.75px;transform:scaleX(1.0984)">generating </span><span style="left:387.16px;transform:scaleX(1.0744)">recognizable </span><span style="left:559.72px;transform:scaleX(1.0660)">Shakespeare-ish </span><span style="left:783.70px;transform:scaleX(1.0159)">text. </span><span style="left:842.67px;transform:scaleX(1.0115)">That's </span><span style="left:923.78px;transform:scaleX(1.1071)">actually </span><span style="left:1033.45px;transform:scaleX(1.0251)"><b>more </b></span><span style="left:1108.83px;transform:scaleX(1.0072)"><b>impressive </b></span><span style="left:1258.48px;transform:scaleX(1.0345)">in </span><span style="left:1288.00px;transform:scaleX(1.0714)">a </span><span style="left:1312.14px;transform:scaleX(1.1240)">demo</span></div>
<div class="t w" style="top:1111.50px;font-size:27.01px;font-weight:400;color:#d6e3f4;left:1810.50px;"><span style="left:0.00px;transform:scaleX(0.8542)">— </span><span style="left:29.48px;transform:scaleX(1.0582)">you </span><span style="left:83.50px;transform:scaleX(1.0174)">see </span><span style="left:135.44px;transform:scaleX(1.0684)">it </span><span style="left:157.89px;transform:scaleX(1.0791)">go </span><span style="left:198.41px;transform:scaleX(1.0980)">from </span><span style="left:265.95px;transform:scaleX(1.0803)">gibberish </span><span style="left:392.44px;transform:scaleX(0.9398)">→ </span><span style="left:424.88px;transform:scaleX(1.1217)">iambic </span><span style="left:520.81px;transform:scaleX(1.1102)">pentameter </span><span style="left:680.78px;transform:scaleX(1.0345)">in </span><span style="left:710.30px;transform:scaleX(1.0634)">real </span><span style="left:766.16px;transform:scaleX(1.0804)">time.</span></div>
<div class="t w" style="top:1162.70px;font-size:27.01px;font-weight:400;color:#d6e3f4;left:1810.50px;"><span style="left:0.00px;transform:scaleX(0.9832)">Here's </span><span style="left:83.27px;transform:scaleX(1.0746)">the </span><span style="left:131.67px;transform:scaleX(1.0524)">full </span><span style="left:175.91px;transform:scaleX(1.1024)">trainable </span><span style="left:298.36px;transform:scaleX(1.0327)">version:</span></div>
<div class="t w" style="top:1230.51px;font-size:31.65px;font-weight:700;color:#dbe7f7;left:1810.50px;"><span style="left:0.00px;transform:scaleX(1.0412)">What </span><span style="left:89.67px;transform:scaleX(0.9733)">this </span><span style="left:152.98px;transform:scaleX(0.9860)">does </span><span style="left:234.47px;transform:scaleX(1.0116)">differently </span><span style="left:398.09px;transform:scaleX(1.0138)">from </span><span style="left:478.30px;transform:scaleX(0.9000)">v1:</span></div>
<div class="t w" style="top:1306.30px;font-size:27.01px;font-weight:400;color:#d6e3f4;left:1810.50px;"><span style="left:0.00px;transform:scaleX(0.9849)">| </span><span style="left:14.30px;transform:scaleX(1.0343)">Feature </span><span style="left:118.31px;transform:scaleX(0.9849)">| </span><span style="left:132.61px;transform:scaleX(0.9000)">v1 </span><span style="left:162.00px;transform:scaleX(0.9849)">| </span><span style="left:176.30px;transform:scaleX(0.9970)">v2 </span><span style="left:212.22px;transform:scaleX(1.0624)">|</span></div>
<div class="t" id="p7" style="top:1365.41px;font-size:18.99px;font-weight:700;color:#d6e3f4;transform:scaleX(0.9481);transform-origin:0 0;left:1810.50px;">…</div>
<div style="position:absolute;left:2418px;top:1394px;width:188px;height:49px;box-sizing:border-box;border:1px solid #34383d;border-radius:25px;background:#0e1114"></div>
<div class="t w" style="top:1404.45px;font-size:20.26px;font-weight:400;color:#e6ebf2;-webkit-text-stroke:0.35px currentColor;left:2444.50px;"><span style="left:0.00px;transform:scaleX(1.0147)">Show </span><span style="left:57.11px;transform:scaleX(1.0484)">More</span></div>
<svg style="position:absolute;left:2557.00px;top:1404.00px;" width="26" height="26" viewBox="0 0 24 24"><path fill="#e6ebf2" d="M16.59 8.59L12 13.17 7.41 8.59 6 10l6 6 6-6z"/></svg>
<div style="position:absolute;left:1784px;top:1475px;width:192px;height:38px;box-sizing:border-box;border:1.5px solid #858b92;border-radius:19px;background:#171c20"></div>
<div class="t w" style="top:1481.21px;font-size:22.15px;font-weight:400;color:#bcc7d3;-webkit-text-stroke:0.35px currentColor;left:1797.50px;"><span style="left:0.00px;transform:scaleX(1.0784)">Claude </span><span style="left:82.31px;transform:scaleX(1.0178)">4.6 </span><span style="left:119.91px;transform:scaleX(0.9561)">Op...</span></div>
<div style="position:absolute;left:1992px;top:1475px;width:61px;height:38px;box-sizing:border-box;border:1.5px solid #858b92;border-radius:19px;background:#171c20"></div>
<svg style="position:absolute;left:2004.50px;top:1484.00px;" width="21" height="21" viewBox="0 0 24 24"><path fill="#bcc7d3" d="M13.783 15.172l2.121-2.121 5.996 5.996-2.121 2.121zM17.5 10c1.93 0 3.5-1.57 3.5-3.5 0-.58-.16-1.12-.41-1.6l-2.7 2.7-1.49-1.49 2.7-2.7c-.48-.25-1.02-.41-1.6-.41C15.57 3 14 4.57 14 6.5c0 .41.08.8.21 1.16l-1.85 1.85-1.78-1.78.71-.71-1.41-1.41L12 3.49c-1.17-1.17-3.07-1.17-4.24 0L4.22 7.03l1.41 1.41H2.81l-.71.71 3.54 3.54.71-.71V9.15l1.41 1.41.71-.71 1.78 1.78-7.41 7.41 2.12 2.12L16.34 9.79c.36.13.75.21 1.16.21z"/></svg>
<div class="t" id="chip2" style="top:1481.21px;font-size:22.15px;font-weight:400;color:#bcc7d3;-webkit-text-stroke:0.35px currentColor;transform:scaleX(0.9000);transform-origin:0 0;left:2032.00px;">1</div>
<div style="position:absolute;left:3055px;top:1468px;width:51px;height:52px;box-sizing:border-box;border:1px solid #393d43;border-radius:9px;background:#0f1216;"></div>
<div style="position:absolute;left:3122px;top:1468px;width:51px;height:52px;box-sizing:border-box;border:1px solid #393d43;border-radius:9px;background:#0f1216;"></div>
<div style="position:absolute;left:3189px;top:1468px;width:51px;height:52px;box-sizing:border-box;border:1px solid #393d43;border-radius:9px;background:#0f1216;"></div>
<svg style="position:absolute;left:3066.30px;top:1480.80px;" width="26" height="26" viewBox="0 0 24 24"><path fill="#dde4ec" d="M16 1H4c-1.1 0-2 .9-2 2v14h2V3h12V1zm3 4H8c-1.1 0-2 .9-2 2v14c0 1.1.9 2 2 2h11c1.1 0 2-.9 2-2V7c0-1.1-.9-2-2-2zm0 16H8V7h11v14z"/></svg>
<svg style="position:absolute;left:3135px;top:1482px;" width="24" height="24" viewBox="0 0 24 24"><g fill="none" stroke="#dde4ec" stroke-width="2.9"><path d="M1.5 12.3V20.2a2.2 2.2 0 0 0 2.2 2.2H20.3a2.2 2.2 0 0 0 2.2-2.2V12.3"/><path d="M12 0.3V16"/><path d="M6.3 10.8L12 16.6L17.7 10.8"/></g></svg>
<svg style="position:absolute;left:3199.00px;top:1478.00px;" width="32" height="32" viewBox="0 0 24 24"><path fill="#dde4ec" d="M12 8c1.1 0 2-.9 2-2s-.9-2-2-2-2 .9-2 2 .9 2 2 2zm0 2c-1.1 0-2 .9-2 2s.9 2 2 2 2-.9 2-2-.9-2-2-2zm0 6c-1.1 0-2 .9-2 2s.9 2 2 2 2-.9 2-2-.9-2-2-2z"/></svg>
<div style="position:absolute;left:1784px;top:1520px;width:1456px;height:128px;border-radius:11px;background:#15181d"></div>
<div class="t w" style="top:1548.40px;font-size:27.01px;font-weight:400;color:#dde6f2;left:1810.50px;"><span style="left:0.00px;transform:scaleX(1.0208)">Whoa: </span><span style="left:87.33px;transform:scaleX(1.1325)">[[micro-transformer-shakespeare-hamlet.txt]] </span><span style="left:699.05px;transform:scaleX(1.0679)">check </span><span style="left:782.39px;transform:scaleX(1.1258)">that </span><span style="left:841.55px;transform:scaleX(1.0429)">out. </span><span style="left:895.84px;transform:scaleX(1.0115)">That's </span><span style="left:976.95px;transform:scaleX(1.1008)">pretty </span><span style="left:1059.55px;transform:scaleX(1.0351)">cool. </span><span style="left:1126.36px;transform:scaleX(1.0607)">What </span><span style="left:1201.17px;transform:scaleX(1.0791)">do </span><span style="left:1241.69px;transform:scaleX(1.0582)">you </span><span style="left:1295.70px;transform:scaleX(1.0403)">think?</span></div>
<div class="t w" style="top:1586.80px;font-size:27.01px;font-weight:400;color:#dde6f2;left:1810.50px;"><span style="left:0.00px;transform:scaleX(1.0607)">What </span><span style="left:74.81px;transform:scaleX(1.0651)">are </span><span style="left:124.38px;transform:scaleX(1.0588)">your </span><span style="left:187.94px;transform:scaleX(1.0951)">thoughts </span><span style="left:309.59px;transform:scaleX(1.0292)">here?</span></div>
<div style="position:absolute;left:3189px;top:1673px;width:51px;height:37px;overflow:hidden"><div style="position:absolute;left:0px;top:0px;width:51px;height:51px;box-sizing:border-box;border:1px solid #2c3035;border-radius:10px;background:#0f1216;"></div></div>
<svg style="position:absolute;left:3201.00px;top:1685.50px;clip-path:inset(0 0 3.5px 0)" width="27" height="27" viewBox="0 0 24 24"><path fill="#e4e7ea" d="M3 17.25V21h3.75L17.81 9.94l-3.75-3.75L3 17.25zM20.71 7.04c.39-.39.39-1.02 0-1.41l-2.34-2.34c-.39-.39-1.02-.39-1.41 0l-1.83 1.83 3.75 3.75 1.83-1.83z"/></svg>
<div style="position:absolute;left:2494.3px;top:1669px;width:51px;height:51px;box-sizing:border-box;border:1px solid #393d42;border-radius:11px;background:#0e1114;box-shadow:0 4px 10px rgba(0,0,0,.5)"></div>
<svg style="position:absolute;left:2503.50px;top:1677.80px;" width="33" height="33" viewBox="0 0 24 24"><path fill="#e4e7ea" d="M18 6.41L16.59 5 12 9.58 7.41 5 6 6.41l6 6zM18 13l-1.41-1.41L12 16.17l-4.59-4.58L6 13l6 6z"/></svg>
<div style="position:absolute;left:1712px;top:1742px;width:1616px;height:200px;background:#13161b;border-top:1px solid #2b2f35;box-sizing:border-box;box-shadow:0 0 45px 5px rgba(30,36,44,.35)"></div>
<div class="t w" style="top:1770.30px;font-size:27.01px;font-weight:400;color:#7c8088;left:1750.00px;"><span style="left:0.00px;transform:scaleX(1.0336)">Type </span><span style="left:68.27px;transform:scaleX(1.0588)">your </span><span style="left:131.83px;transform:scaleX(1.0786)">message </span><span style="left:258.09px;transform:scaleX(0.9641)">here...</span></div>
<div style="position:absolute;left:1738px;top:1862px;width:51px;height:51px;box-sizing:border-box;border:1px solid #33373d;border-radius:10px;background:#13161b;"></div>
<svg style="position:absolute;left:1749.00px;top:1873.00px;" width="29" height="29" viewBox="0 0 24 24"><path fill="#dfe4ea" d="M16.5 6v11.5c0 2.21-1.79 4-4 4s-4-1.79-4-4V5c0-1.38 1.12-2.5 2.5-2.5s2.5 1.12 2.5 2.5v10.5c0 .55-.45 1-1 1s-1-.45-1-1V6H10v9.5c0 1.38 1.12 2.5 2.5 2.5s2.5-1.12 2.5-2.5V5c0-2.21-1.79-4-4-4S7 2.79 7 5v12.5c0 3.04 2.46 5.5 5.5 5.5s5.5-2.46 5.5-5.5V6h-1.5z"/></svg>
<div style="position:absolute;left:1805px;top:1862px;width:51px;height:51px;box-sizing:border-box;border:1px solid #33373d;border-radius:10px;background:#13161b;"></div>
<svg style="position:absolute;left:1816.5px;top:1875.5px;" width="27" height="23.5" preserveAspectRatio="none" viewBox="0 0 24 24"><path fill="#f4f6f8" d="M20 6h-8l-2-2H4c-1.1 0-1.99.9-1.99 2L2 18c0 1.1.9 2 2 2h16c1.1 0 2-.9 2-2V8c0-1.1-.9-2-2-2zm-5 3c1.1 0 2 .9 2 2s-.9 2-2 2-2-.9-2-2 .9-2 2-2zm4 8h-8v-1c0-1.33 2.67-2 4-2s4 .67 4 2v1z"/></svg>
<div style="position:absolute;left:1833px;top:1853px;width:32px;height:32px;border-radius:16px;background:#2f6bc8"></div>
<div class="t" style="top:1858.01px;font-size:18.99px;font-weight:700;color:#ffffff;transform:scaleX(0.9000);transform-origin:50% 0;left:848.90px;width:2000px;text-align:center;"><span id="badge">1</span></div>
<div style="position:absolute;left:1872px;top:1862px;width:248px;height:51px;box-sizing:border-box;border:1px solid #33373d;border-radius:10px;background:#13161b;"></div>
<svg style="position:absolute;left:1885.75px;top:1876.25px;" width="22.5" height="22.5" viewBox="0 0 24 24"><path fill="#d6e3f4" d="M19.14 12.94c.04-.3.06-.61.06-.94 0-.32-.02-.64-.07-.94l2.03-1.58c.18-.14.23-.41.12-.61l-1.92-3.32c-.12-.22-.37-.29-.59-.22l-2.39.96c-.5-.38-1.03-.7-1.62-.94l-.36-2.54c-.04-.24-.24-.41-.48-.41h-3.84c-.24 0-.43.17-.47.41l-.36 2.54c-.59.24-1.13.57-1.62.94l-2.39-.96c-.22-.08-.47 0-.59.22L2.74 8.87c-.12.21-.08.47.12.61l2.03 1.58c-.05.3-.09.63-.09.94s.02.64.07.94l-2.03 1.58c-.18.14-.23.41-.12.61l1.92 3.32c.12.22.37.29.59.22l2.39-.96c.5.38 1.03.7 1.62.94l.36 2.54c.05.24.24.41.48.41h3.84c.24 0 .44-.17.47-.41l.36-2.54c.59-.24 1.13-.56 1.62-.94l2.39.96c.22.08.47 0 .59-.22l1.92-3.32c.12-.22.07-.47-.12-.61l-2.01-1.58zM12 15.6c-1.98 0-3.6-1.62-3.6-3.6s1.62-3.6 3.6-3.6 3.6 1.62 3.6 3.6-1.62 3.6-3.6 3.6z"/></svg>
<div class="t w" style="top:1873.12px;font-size:23.63px;font-weight:400;color:#d6e3f4;left:1920.00px;"><span style="left:0.00px;transform:scaleX(1.0716)">Claude </span><span style="left:87.27px;transform:scaleX(0.9893)">4.6 </span><span style="left:126.25px;transform:scaleX(1.0407)">Opus</span></div>
<div style="position:absolute;left:2136px;top:1862px;width:217px;height:51px;box-sizing:border-box;border:1px solid #33373d;border-radius:10px;background:#13161b;"></div>
<svg style="position:absolute;left:2149.50px;top:1876.00px;" width="23" height="23" viewBox="0 0 24 24"><path fill="#d6e3f4" d="M13.783 15.172l2.121-2.121 5.996 5.996-2.121 2.121zM17.5 10c1.93 0 3.5-1.57 3.5-3.5 0-.58-.16-1.12-.41-1.6l-2.7 2.7-1.49-1.49 2.7-2.7c-.48-.25-1.02-.41-1.6-.41C15.57 3 14 4.57 14 6.5c0 .41.08.8.21 1.16l-1.85 1.85-1.78-1.78.71-.71-1.41-1.41L12 3.49c-1.17-1.17-3.07-1.17-4.24 0L4.22 7.03l1.41 1.41H2.81l-.71.71 3.54 3.54.71-.71V9.15l1.41 1.41.71-.71 1.78 1.78-7.41 7.41 2.12 2.12L16.34 9.79c.36.13.75.21 1.16.21z"/></svg>
<div class="t w" style="top:1873.12px;font-size:23.63px;font-weight:400;color:#d6e3f4;left:2181.50px;"><span style="left:0.00px;transform:scaleX(1.0676)">Smart </span><span style="left:73.83px;transform:scaleX(1.0513)">Tools</span></div>
<div style="position:absolute;left:2369px;top:1862px;width:138px;height:51px;box-sizing:border-box;border:1px solid #33373d;border-radius:10px;background:#13161b;"></div>
<svg style="position:absolute;left:2382.75px;top:1875.25px;" width="23.5" height="23.5" viewBox="0 0 24 24"><path fill="#d6e3f4" d="M20 9V7c0-1.1-.9-2-2-2h-3c0-1.66-1.34-3-3-3S9 3.34 9 5H6c-1.1 0-2 .9-2 2v2c-1.66 0-3 1.34-3 3s1.34 3 3 3v4c0 1.1.9 2 2 2h12c1.1 0 2-.9 2-2v-4c1.66 0 3-1.34 3-3s-1.34-3-3-3zM7.5 11.5c0-.83.67-1.5 1.5-1.5s1.5.67 1.5 1.5S9.83 13 9 13s-1.5-.67-1.5-1.5zM16 17H8v-2h8v2zm-1-4c-.83 0-1.5-.67-1.5-1.5S14.17 10 15 10s1.5.67 1.5 1.5S15.83 13 15 13z"/></svg>
<div class="t" id="b3" style="top:1873.12px;font-size:23.63px;font-weight:400;color:#d6e3f4;transform:scaleX(1.0641);transform-origin:0 0;left:2414.50px;">Agents</div>
<div style="position:absolute;left:3184px;top:1862px;width:51px;height:51px;box-sizing:border-box;border:1px solid #33373d;border-radius:10px;background:#13161b;"></div>
<svg style="position:absolute;left:3195.50px;top:1873.50px;" width="28" height="28" viewBox="0 0 24 24"><path fill="#dfe4ea" d="M12 14c1.66 0 2.99-1.34 2.99-3L15 5c0-1.66-1.34-3-3-3S9 3.34 9 5v6c0 1.66 1.34 3 3 3zm5.3-3c0 3-2.54 5.1-5.3 5.1S6.7 14 6.7 11H5c0 3.41 2.72 6.23 6 6.72V21h2v-3.28c3.28-.48 6-3.3 6-6.72h-1.7z"/></svg>
<div style="position:absolute;left:3251px;top:1862px;width:52px;height:51px;border-radius:9px;background:#b62d29"></div>
<svg style="position:absolute;left:3261.50px;top:1872.00px;" width="31" height="31" viewBox="0 0 24 24"><path fill="#ffffff" d="M12 2C6.48 2 2 6.48 2 12s4.48 10 10 10 10-4.48 10-10S17.52 2 12 2zm4 14H8V8h8v8z"/></svg>
</div><script>(function(){var s=window.innerWidth/3336;if(s>0&&Math.abs(s-1)>0.01){document.getElementById("root").style.transform="scale("+s+")";}})();</script></body></html>
